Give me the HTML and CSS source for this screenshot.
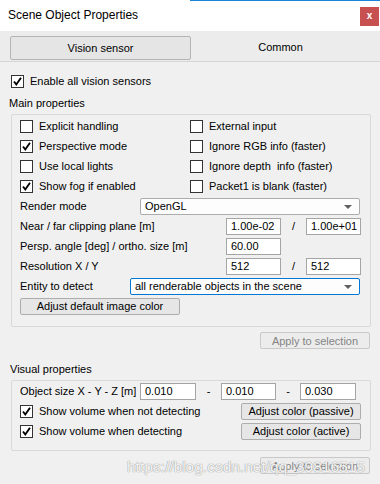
FILE: index.html
```html
<!DOCTYPE html>
<html lang="en">
<head>
  <meta charset="UTF-8" />
  <title>Scene Object Properties</title>
  <link rel="stylesheet" href="styles.css">
</head>
<body>
  <div class="window">
    <div class="titlebar">
      <span class="title">Scene Object Properties</span>
      <span class="close">x</span>
    </div>

    <div class="tabs">
      <div class="tab active">Vision sensor</div>
      <div class="tab">Common</div>
    </div>

    <div class="content">
      <label class="check top-check"><span class="box checked"></span>Enable all vision sensors</label>

      <div class="section-label">Main properties</div>
      <div class="group main-group">
        <div class="check-grid">
          <label class="check"><span class="box"></span>Explicit handling</label>
          <label class="check"><span class="box"></span>External input</label>
          <label class="check"><span class="box checked"></span>Perspective mode</label>
          <label class="check"><span class="box"></span>Ignore RGB info (faster)</label>
          <label class="check"><span class="box"></span>Use local lights</label>
          <label class="check"><span class="box"></span>Ignore depth&nbsp; info (faster)</label>
          <label class="check"><span class="box checked"></span>Show fog if enabled</label>
          <label class="check"><span class="box"></span>Packet1 is blank (faster)</label>
        </div>

        <div class="row">
          <span class="label w-render">Render mode</span>
          <div class="select w-select1">OpenGL<span class="arrow"></span></div>
        </div>
        <div class="row">
          <span class="label w-long">Near / far clipping plane [m]</span>
          <span class="field">1.00e-02</span>
          <span class="sep">/</span>
          <span class="field">1.00e+01</span>
        </div>
        <div class="row">
          <span class="label w-long">Persp. angle [deg] / ortho. size [m]</span>
          <span class="field">60.00</span>
        </div>
        <div class="row">
          <span class="label w-long">Resolution X / Y</span>
          <span class="field">512</span>
          <span class="sep">/</span>
          <span class="field">512</span>
        </div>
        <div class="row">
          <span class="label w-entity">Entity to detect</span>
          <div class="select focus w-select2">all renderable objects in the scene<span class="arrow"></span></div>
        </div>
        <div class="row">
          <button class="btn w-adjust">Adjust default image color</button>
        </div>
      </div>

      <div class="apply-row">
        <button class="btn disabled">Apply to selection</button>
      </div>

      <div class="section-label visual-label">Visual properties</div>
      <div class="group visual-group">
        <div class="row">
          <span class="label w-render">Object size X - Y - Z [m]</span>
          <span class="field w56">0.010</span>
          <span class="sep">-</span>
          <span class="field">0.010</span>
          <span class="sep narrow">-</span>
          <span class="field w56">0.030</span>
        </div>
        <div class="row split">
          <label class="check"><span class="box checked"></span>Show volume when not detecting</label>
          <button class="btn w-color">Adjust color (passive)</button>
        </div>
        <div class="row split">
          <label class="check"><span class="box checked"></span>Show volume when detecting</label>
          <button class="btn w-color">Adjust color (active)</button>
        </div>
      </div>

      <div class="apply-row bottom">
        <button class="btn disabled">Apply to selection</button>
      </div>
    </div>

    <div class="watermark">https://blog.csdn.net/qq_39816515</div>
  </div>
</body>
</html>
```

FILE: styles.css
```css
body {
  margin: 0;
  background: #f0f0f0;
  font-family: 'Liberation Sans', Arial, sans-serif;
  font-size: 11px;
  color: #000;
}

.window {
  position: relative;
  width: 380px;
  height: 484px;
  overflow: hidden;
  background: #f0f0f0;
}

/* title bar */
.titlebar {
  position: relative;
  height: 31px;
  background: #fff;
  display: flex;
  align-items: center;
  justify-content: space-between;
  padding-left: 8px;
  box-sizing: border-box;
}

.titlebar::before {
  content: "";
  position: absolute;
  top: 0;
  left: 190px;
  right: 0;
  height: 1px;
  background: #1a84d8;
}

.title {
  font-size: 12px;
  margin-top: -1px;
}

.close {
  width: 19px;
  height: 19px;
  margin: 2px 1px 0 0;
  background: #c75050;
  color: #fff;
  font-weight: bold;
  font-size: 10px;
  line-height: 17px;
  text-align: center;
}

/* tabs */
.tabs {
  display: flex;
  height: 31px;
  padding: 5px 10px 0 10px;
  box-sizing: border-box;
  background: #ececec;
  border-bottom: 1px solid #d6d6d6;
}

.tab {
  flex: 1;
  height: 24px;
  line-height: 22px;
  text-align: center;
  box-sizing: border-box;
}

.tab.active {
  background: #e5e5e5;
  border: 1px solid #b4b4b4;
  border-radius: 2px;
}

/* content */
.content {
  padding-top: 9px;
}

.check {
  display: flex;
  align-items: center;
  height: 20px;
  white-space: nowrap;
}

.top-check {
  padding-left: 11px;
}

.box {
  width: 13px;
  height: 13px;
  box-sizing: border-box;
  border: 1px solid #333;
  background: #fff;
  margin-right: 6px;
  flex-shrink: 0;
}

.box.checked {
  background: #fff url("data:image/svg+xml;utf8,<svg xmlns='http://www.w3.org/2000/svg' width='11' height='11'><path d='M2 5.5 L4.3 8.5 L9 1.8' fill='none' stroke='black' stroke-width='1.9'/></svg>") no-repeat center;
}

.section-label {
  height: 14px;
  line-height: 14px;
  padding-left: 9px;
  margin-top: 5px;
}

.group {
  margin: 4px 0 0 11px;
  width: 360px;
  box-sizing: border-box;
  border: 1px solid #d9d9d9;
  border-radius: 2px;
  padding: 1px 9px 0 8px;
}

.main-group {
  padding-bottom: 10px;
}

.check-grid {
  display: grid;
  grid-template-columns: 170px 1fr;
}

.row {
  display: flex;
  align-items: center;
  height: 20px;
  white-space: nowrap;
}

.row.split {
  justify-content: space-between;
}

.label {
  flex-shrink: 0;
}

.w-render { width: 120px; }
.w-long { width: 206px; }
.w-entity { width: 110px; }

.field {
  width: 55px;
  height: 17px;
  line-height: 15px;
  box-sizing: border-box;
  border: 1px solid #a5a5a5;
  background: #fff;
  padding-left: 4px;
}

.field.w56 { width: 56px; }

.sep {
  width: 25px;
  text-align: center;
}

.sep.narrow { width: 24px; }

.select {
  position: relative;
  height: 17px;
  line-height: 15px;
  box-sizing: border-box;
  border: 1px solid #acacac;
  border-radius: 2px;
  background: #fdfdfd;
  padding-left: 4px;
}

.select.focus {
  border-color: #0078d7;
}

.w-select1 { width: 220px; }
.w-select2 { width: 230px; }

.arrow {
  position: absolute;
  right: 7px;
  top: 6px;
  border-left: 4px solid transparent;
  border-right: 4px solid transparent;
  border-top: 4px solid #606060;
}

.btn {
  display: block;
  font-family: inherit;
  font-size: 11px;
  color: #000;
  height: 17px;
  padding: 0;
  box-sizing: border-box;
  border: 1px solid #adadad;
  border-radius: 2px;
  background: #e6e6e6;
}

.w-adjust { width: 160px; }
.w-color { width: 120px; }

.btn.disabled {
  width: 110px;
  color: #838383;
  border-color: #c9c9c9;
  background: #ececec;
}

.apply-row {
  display: flex;
  justify-content: flex-end;
  width: 370px;
  height: 17px;
  margin-top: 5px;
}

.apply-row.bottom {
  margin-top: 6px;
}

.visual-label {
  margin-top: 13px;
  padding-left: 10px;
}

.visual-group {
  padding-bottom: 9px;
  padding-top: 0;
}

/* blog watermark over the bottom */
.watermark {
  position: absolute;
  left: 127px;
  top: 458px;
  font-size: 15.5px;
  color: rgba(255, 255, 255, 0.9);
  text-shadow: 0 0 1px #9a9a9a, 0 0 1px #9a9a9a;
  white-space: nowrap;
}
```
